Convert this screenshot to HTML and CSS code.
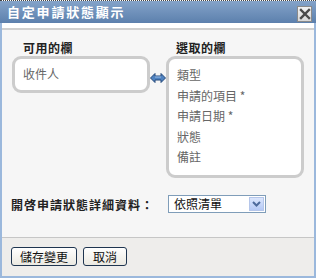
FILE: index.html
```html
<!DOCTYPE html>
<html lang="zh-Hant">
<head>
<meta charset="utf-8">
<link rel="stylesheet" href="styles.css">
</head>
<body>
<div class="dialog">
  <div class="titlebar">
    <span class="title">自定申請狀態顯示</span>
    <span class="close"><svg width="12" height="12" viewBox="0 0 12 12"><path d="M2 2 L10 10 M10 2 L2 10" stroke="#4a4a4a" stroke-width="2.4" stroke-linecap="square"/></svg></span>
  </div>
  <div class="frame">
    <div class="panel">
      <div class="columns">
        <div class="col">
          <div class="col-label left-label">可用的欄</div>
          <div class="listbox short"><div class="item">收件人</div></div>
        </div>
        <div class="arrow-col">
          <svg width="16" height="10" viewBox="0 0 16 10"><path d="M0.5 5 L5 0.5 L5 3 L11 3 L11 0.5 L15.5 5 L11 9.5 L11 7 L5 7 L5 9.5 Z" fill="#4f82c0" stroke="#24487a" stroke-width="1" stroke-linejoin="miter"/><path d="M5 4 L11 4" stroke="#9cc0ea" stroke-width="1"/></svg>
        </div>
        <div class="col">
          <div class="col-label right-label">選取的欄</div>
          <div class="listbox tall">
            <div class="item">類型</div>
            <div class="item">申請的項目 *</div>
            <div class="item">申請日期 *</div>
            <div class="item">狀態</div>
            <div class="item">備註</div>
          </div>
        </div>
      </div>
      <div class="detail-row">
        <span class="detail-label">開啓申請狀態詳細資料：</span>
        <span class="select"><span class="select-text">依照清單</span><span class="select-btn"><svg width="9" height="6" viewBox="0 0 9 6"><path d="M1 1 L4.5 4.5 L8 1" fill="none" stroke="#4d6a9c" stroke-width="2"/></svg></span></span>
      </div>
    </div>
    <div class="footer">
      <button class="btn save">儲存變更</button>
      <button class="btn cancel">取消</button>
    </div>
  </div>
</div>
</body>
</html>
```
FILE: styles.css
```css
html, body {
  margin: 0;
  padding: 0;
  background: #ffffff;
}
body {
  width: 316px;
  height: 278px;
  overflow: hidden;
  font-family: "Noto Sans CJK TC", "Noto Sans", sans-serif;
  font-size: 12px;
}
.dialog {
  width: 316px;
  border-top: 1px dotted #444;
}
.titlebar {
  height: 22px;
  background: linear-gradient(#84a3c9, #5c80ad);
  display: flex;
  align-items: center;
  justify-content: space-between;
  padding: 0 4px 0 7px;
}
.title {
  color: #ffffff;
  font-weight: bold;
  font-size: 13px;
  letter-spacing: 1.8px;
  line-height: 16px;
}
.close {
  width: 13px;
  height: 14px;
  margin-top: 4px;
  border: 1px solid #8a8a8a;
  background: linear-gradient(#f2f2f2, #d8d8d8);
  display: flex;
  align-items: center;
  justify-content: center;
}
.frame {
  background: #ffffff;
  border: solid #9bb8dc;
  border-width: 0 2px 2px 2px;
  padding-top: 5px;
}
.panel {
  height: 210px;
  box-sizing: border-box;
  background: #f6f6f6;
  border-top: 2px solid #cfcfcf;
  border-bottom: 1px solid #c6c6c6;
  padding: 11px 0 0 10px;
}
.columns {
  display: flex;
}
.col {
  width: 138px;
  display: flex;
  flex-direction: column;
}
.col-label {
  font-weight: bold;
  color: #222;
  line-height: 14px;
  height: 15px;
  letter-spacing: 0.5px;
}
.left-label { padding-left: 11px; }
.right-label { padding-left: 10px; }
.listbox {
  box-sizing: border-box;
  border: 3px solid #cccccc;
  border-radius: 9px;
  background: #ffffff;
  padding: 6px 0 0 8px;
  color: #666666;
}
.listbox.short { height: 37px; padding-top: 5px; }
.listbox.tall { height: 122px; }
.item {
  line-height: 20.5px;
}
.arrow-col {
  width: 16px;
  padding-top: 32px;
}
.arrow-col svg { display: block; }
.detail-row {
  display: flex;
  align-items: center;
  margin-top: 17px;
  margin-left: -1px;
}
.detail-label {
  width: 157px;
  font-weight: bold;
  color: #222;
  letter-spacing: 1px;
}
.select {
  box-sizing: border-box;
  width: 98px;
  height: 18px;
  border: 1px solid #7f9db9;
  background: #fff;
  display: flex;
  align-items: center;
  justify-content: space-between;
  padding: 0 1px 0 5px;
}
.select-text { color: #111; line-height: 14px; }
.select-btn {
  width: 15px;
  height: 14px;
  background: linear-gradient(#dbe6fd, #b5c9f6);
  border: 1px solid #b5c6ea;
  box-sizing: border-box;
  display: flex;
  align-items: center;
  justify-content: center;
}
.footer {
  height: 38px;
  background: #eeedeb;
  padding: 9px 0 0 9px;
  box-sizing: border-box;
  display: flex;
  gap: 6px;
  align-items: flex-start;
}
.btn {
  height: 19px;
  box-sizing: border-box;
  border: 1px solid #1f3550;
  border-radius: 3px;
  background: linear-gradient(#ffffff, #ebe9e1);
  font-family: "Noto Sans CJK TC", "Noto Sans", sans-serif;
  font-size: 12px;
  color: #111;
  padding: 0;
  line-height: 15px;
}
.btn.save { width: 66px; }
.btn.cancel { width: 44px; }
```
